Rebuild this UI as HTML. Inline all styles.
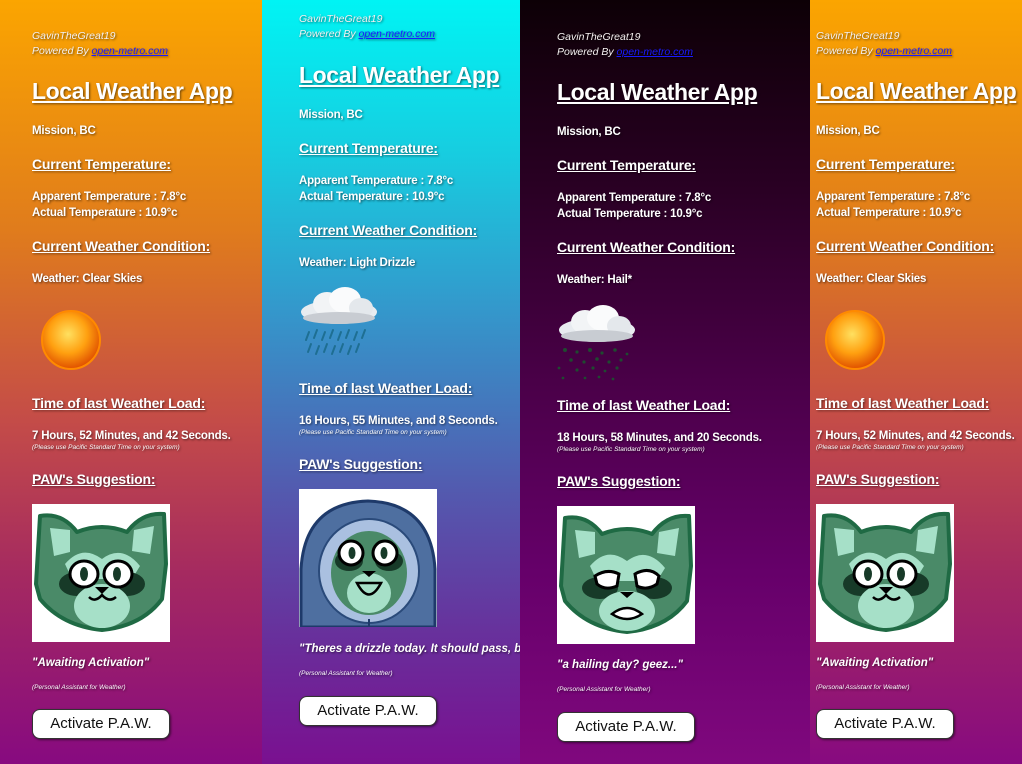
<!DOCTYPE html>
<html><head><meta charset="utf-8">
<style>
*{margin:0;padding:0;box-sizing:border-box}
body{width:1022px;height:764px;overflow:hidden;position:relative;font-family:"Liberation Sans",sans-serif;}
.p{position:absolute;top:0;height:764px;overflow:hidden}
.p1{left:0;width:262px;background:linear-gradient(#fba500 0%,#e07c1c 30%,#c44c48 55%,#a52a60 75%,#870a80 100%)}
.p4{left:810px;width:212px;background:linear-gradient(#fba500 0%,#e07c1c 30%,#c44c48 55%,#a52a60 75%,#870a80 100%)}
.p2{left:262px;width:258px;background:linear-gradient(#00f4f4 0%,#17cde0 20%,#3399cc 40%,#5458ae 65%,#6a2c9a 85%,#7a1090 100%)}
.p3{left:520px;width:290px;background:linear-gradient(#0d0006 0%,#2a0024 25%,#4a0048 50%,#66006a 75%,#80087e 100%)}
.t{position:absolute;white-space:nowrap;line-height:20px;color:#fff;text-shadow:1px 1px 2px rgba(0,0,0,.55)}
.g{font-size:10.5px;font-style:italic;color:#f4f0f0}
.g a{color:#1a1aff;text-decoration:underline}
.h1{font-size:23px;font-weight:bold;text-decoration:underline;letter-spacing:-0.4px}
.h2{font-size:14px;font-weight:bold;text-decoration:underline;letter-spacing:-0.2px}
.b{font-size:11.5px;font-weight:bold;letter-spacing:-0.2px}
.n{font-size:6.5px;font-style:italic}
.q{font-size:11.5px;font-weight:bold;font-style:italic}
.btn{position:absolute;width:138px;height:30px;background:#fff;border:1px solid #333;border-radius:8px;font-size:15px;color:#111;text-align:center;line-height:28px;box-shadow:1px 1px 2px rgba(0,0,0,.5)}
.img{position:absolute;width:138px;height:138px;background:#fff}
svg{display:block}
</style></head><body>

<svg width="0" height="0" style="position:absolute">
<defs>
<radialGradient id="sun" cx="45%" cy="40%" r="60%"><stop offset="0" stop-color="#ffe060"/><stop offset=".55" stop-color="#ffa010"/><stop offset="1" stop-color="#e05000"/></radialGradient>
<symbol id="rac" viewBox="0 0 138 138">
<path d="M8 12 Q30 8 45 28 Q70 18 95 28 Q110 8 132 10 L134 60 L130 95 Q110 122 70 126 Q30 122 8 95 L4 80 Z" fill="#4a8a68" stroke="#1f6a44" stroke-width="4" stroke-linejoin="round"/>
<path d="M18 24 L38 26 L38 48 L22 52 Z" fill="#a6e0c8"/>
<path d="M122 22 L102 26 L100 47 L118 50 Z" fill="#a6e0c8"/>
<path d="M33 60 Q50 40 70 55 Q90 40 108 62 L100 75 L40 75 Z" fill="#a6e0c8"/>
<ellipse cx="45" cy="80" rx="18" ry="12" fill="#173a28"/>
<ellipse cx="95" cy="80" rx="18" ry="12" fill="#173a28"/>
<ellipse cx="70" cy="102" rx="28" ry="22" fill="#a6e0c8"/>
<ellipse cx="52" cy="70" rx="14" ry="13" fill="#fff" stroke="#000" stroke-width="3"/>
<ellipse cx="86" cy="70" rx="14" ry="13" fill="#fff" stroke="#000" stroke-width="3"/>
<ellipse cx="52" cy="70" rx="4" ry="7" fill="#173a28"/>
<ellipse cx="85" cy="70" rx="4" ry="7" fill="#173a28"/>
<path d="M63 83 L77 83 L70 90 Z" fill="#000"/>
<path d="M57 93 Q63 99 70 91 Q77 99 84 93" fill="none" stroke="#000" stroke-width="2.5"/>
</symbol>
<symbol id="rac3" viewBox="0 0 138 138">
<path d="M8 12 Q30 8 45 28 Q70 18 95 28 Q110 8 132 10 L134 60 L130 95 Q110 122 70 126 Q30 122 8 95 L4 80 Z" fill="#4a8a68" stroke="#1f6a44" stroke-width="4" stroke-linejoin="round"/>
<path d="M18 24 L38 26 L38 48 L22 52 Z" fill="#a6e0c8"/>
<path d="M122 22 L102 26 L100 47 L118 50 Z" fill="#a6e0c8"/>
<path d="M33 60 Q50 40 70 55 Q90 40 108 62 L100 75 L40 75 Z" fill="#a6e0c8"/>
<ellipse cx="43" cy="82" rx="18" ry="11" fill="#173a28"/>
<ellipse cx="97" cy="82" rx="18" ry="11" fill="#173a28"/>
<ellipse cx="70" cy="105" rx="28" ry="20" fill="#a6e0c8"/>
<path d="M38 70 Q50 62 62 68 L60 80 Q48 85 40 78 Z" fill="#fff" stroke="#000" stroke-width="3"/>
<path d="M78 68 Q92 60 102 70 L100 78 Q90 85 80 80 Z" fill="#fff" stroke="#000" stroke-width="3"/>
<path d="M63 86 L77 86 L70 92 Z" fill="#000"/>
<path d="M55 108 Q70 96 85 108 Q70 118 55 108 Z" fill="#fff" stroke="#000" stroke-width="2.5"/>
</symbol>
<symbol id="rac2" viewBox="0 0 138 138">
<path d="M2 138 L2 80 Q6 14 69 12 Q132 14 136 80 L136 138 Z" fill="#4e6fa0" stroke="#1e3a6a" stroke-width="3"/>
<ellipse cx="70" cy="82" rx="50" ry="52" fill="#aac0e0" stroke="#2a4a7a" stroke-width="2"/>
<ellipse cx="70" cy="84" rx="38" ry="42" fill="#4a8a68"/>
<ellipse cx="50" cy="72" rx="14" ry="10" fill="#173a28"/>
<ellipse cx="90" cy="72" rx="14" ry="10" fill="#173a28"/>
<ellipse cx="70" cy="104" rx="22" ry="20" fill="#a6e0c8"/>
<ellipse cx="52" cy="64" rx="12" ry="12" fill="#fff" stroke="#000" stroke-width="3"/>
<ellipse cx="86" cy="64" rx="12" ry="12" fill="#fff" stroke="#000" stroke-width="3"/>
<ellipse cx="53" cy="64" rx="3.5" ry="6" fill="#173a28"/>
<ellipse cx="85" cy="64" rx="3.5" ry="6" fill="#173a28"/>
<path d="M63 82 L77 82 L70 88 Z" fill="#000"/>
<path d="M58 94 Q70 117 82 94 Z" fill="#a6e0c8" stroke="#000" stroke-width="2.5"/>
<line x1="70" y1="130" x2="70" y2="138" stroke="#1e3a6a" stroke-width="2"/>
</symbol>
<symbol id="cloud" viewBox="0 0 80 40">
<ellipse cx="40" cy="26" rx="38" ry="12" fill="#e8ecf0"/>
<ellipse cx="28" cy="18" rx="14" ry="12" fill="#f2f4f6"/>
<ellipse cx="46" cy="14" rx="16" ry="13" fill="#fafbfc"/>
<ellipse cx="62" cy="22" rx="12" ry="10" fill="#e4e8ec"/>
<ellipse cx="40" cy="32" rx="36" ry="6" fill="#c8ccd2"/>
</symbol>
</defs>
</svg>

<!-- Panel 1 -->
<div class="p p1">
<div class="t g" style="left:32px;top:26px">GavinTheGreat19</div>
<div class="t g" style="left:32px;top:41px">Powered By <a>open-metro.com</a></div>
<div class="t h1" style="left:32px;top:81px">Local Weather App</div>
<div class="t b" style="left:32px;top:121px">Mission, BC</div>
<div class="t h2" style="left:32px;top:154px">Current Temperature:</div>
<div class="t b" style="left:32px;top:187px">Apparent Temperature : 7.8°c</div>
<div class="t b" style="left:32px;top:203px">Actual Temperature : 10.9°c</div>
<div class="t h2" style="left:32px;top:236px">Current Weather Condition:</div>
<div class="t b" style="left:32px;top:269px">Weather: Clear Skies</div>
<svg style="position:absolute;left:40px;top:309px" width="62" height="62"><circle cx="31" cy="31" r="29" fill="url(#sun)" stroke="#ff8a00" stroke-width="2"/></svg>
<div class="t h2" style="left:32px;top:393px">Time of last Weather Load:</div>
<div class="t b" style="left:32px;top:426px">7 Hours, 52 Minutes, and 42 Seconds.</div>
<div class="t n" style="left:32px;top:438px">(Please use Pacific Standard Time on your system)</div>
<div class="t h2" style="left:32px;top:469px">PAW's Suggestion:</div>
<div class="img" style="left:32px;top:504px"><svg width="138" height="138"><use href="#rac"/></svg></div>
<div class="t q" style="left:32px;top:653px">"Awaiting Activation"</div>
<div class="t n" style="left:32px;top:678px">(Personal Assistant for Weather)</div>
<div class="btn" style="left:32px;top:709px">Activate P.A.W.</div>
</div>

<!-- Panel 2 -->
<div class="p p2">
<div class="t g" style="left:37px;top:9px">GavinTheGreat19</div>
<div class="t g" style="left:37px;top:24px">Powered By <a>open-metro.com</a></div>
<div class="t h1" style="left:37px;top:65px">Local Weather App</div>
<div class="t b" style="left:37px;top:105px">Mission, BC</div>
<div class="t h2" style="left:37px;top:138px">Current Temperature:</div>
<div class="t b" style="left:37px;top:171px">Apparent Temperature : 7.8°c</div>
<div class="t b" style="left:37px;top:187px">Actual Temperature : 10.9°c</div>
<div class="t h2" style="left:37px;top:220px">Current Weather Condition:</div>
<div class="t b" style="left:37px;top:253px">Weather: Light Drizzle</div>
<svg style="position:absolute;left:37px;top:286px" width="80" height="78">
<use href="#cloud" width="80" height="40"/>
<g stroke="#1a6a8a" stroke-width="2" stroke-linecap="round" opacity=".85">
<line x1="10" y1="46" x2="7" y2="54"/><line x1="18" y1="44" x2="15" y2="52"/><line x1="26" y1="46" x2="23" y2="54"/><line x1="34" y1="44" x2="31" y2="52"/><line x1="42" y1="46" x2="39" y2="54"/><line x1="50" y1="44" x2="47" y2="52"/><line x1="58" y1="46" x2="55" y2="54"/><line x1="66" y1="44" x2="63" y2="52"/>
<line x1="12" y1="58" x2="9" y2="66"/><line x1="20" y1="60" x2="17" y2="68"/><line x1="28" y1="58" x2="25" y2="66"/><line x1="36" y1="60" x2="33" y2="68"/><line x1="44" y1="58" x2="41" y2="66"/><line x1="52" y1="60" x2="49" y2="68"/><line x1="60" y1="58" x2="57" y2="66"/>
</g></svg>
<div class="t h2" style="left:37px;top:378px">Time of last Weather Load:</div>
<div class="t b" style="left:37px;top:411px">16 Hours, 55 Minutes, and 8 Seconds.</div>
<div class="t n" style="left:37px;top:423px">(Please use Pacific Standard Time on your system)</div>
<div class="t h2" style="left:37px;top:454px">PAW's Suggestion:</div>
<div class="img" style="left:37px;top:489px"><svg width="138" height="138"><use href="#rac2"/></svg></div>
<div class="t q" style="left:37px;top:639px">"Theres a drizzle today. It should pass, but stay dry!"</div>
<div class="t n" style="left:37px;top:664px">(Personal Assistant for Weather)</div>
<div class="btn" style="left:37px;top:696px">Activate P.A.W.</div>
</div>

<!-- Panel 3 -->
<div class="p p3">
<div class="t g" style="left:37px;top:27px">GavinTheGreat19</div>
<div class="t g" style="left:37px;top:42px">Powered By <a>open-metro.com</a></div>
<div class="t h1" style="left:37px;top:82px">Local Weather App</div>
<div class="t b" style="left:37px;top:122px">Mission, BC</div>
<div class="t h2" style="left:37px;top:155px">Current Temperature:</div>
<div class="t b" style="left:37px;top:188px">Apparent Temperature : 7.8°c</div>
<div class="t b" style="left:37px;top:204px">Actual Temperature : 10.9°c</div>
<div class="t h2" style="left:37px;top:237px">Current Weather Condition:</div>
<div class="t b" style="left:37px;top:270px">Weather: Hail*</div>
<svg style="position:absolute;left:37px;top:304px" width="80" height="78">
<use href="#cloud" width="80" height="40"/>
<g fill="#1f4a30">
<circle cx="8" cy="46" r="2"/><circle cx="20" cy="48" r="1.6"/><circle cx="33" cy="46" r="2"/><circle cx="45" cy="49" r="1.6"/><circle cx="58" cy="46" r="1.8"/><circle cx="70" cy="50" r="1.4"/>
<circle cx="14" cy="56" r="1.8"/><circle cx="27" cy="58" r="1.6"/><circle cx="40" cy="55" r="1.8"/><circle cx="52" cy="58" r="1.6"/><circle cx="64" cy="56" r="1.6"/>
<circle cx="2" cy="64" r="1.4"/><circle cx="20" cy="66" r="1.6"/><circle cx="36" cy="64" r="1.6"/><circle cx="48" cy="67" r="1.4"/><circle cx="60" cy="64" r="1.6"/>
<circle cx="6" cy="74" r="1.4"/><circle cx="28" cy="74" r="1.4"/><circle cx="42" cy="73" r="1.4"/><circle cx="56" cy="75" r="1.4"/>
</g></svg>
<div class="t h2" style="left:37px;top:395px">Time of last Weather Load:</div>
<div class="t b" style="left:37px;top:428px">18 Hours, 58 Minutes, and 20 Seconds.</div>
<div class="t n" style="left:37px;top:440px">(Please use Pacific Standard Time on your system)</div>
<div class="t h2" style="left:37px;top:471px">PAW's Suggestion:</div>
<div class="img" style="left:37px;top:506px"><svg width="138" height="138"><use href="#rac3"/></svg></div>
<div class="t q" style="left:37px;top:655px">"a hailing day? geez..."</div>
<div class="t n" style="left:37px;top:680px">(Personal Assistant for Weather)</div>
<div class="btn" style="left:37px;top:712px">Activate P.A.W.</div>
</div>

<!-- Panel 4 -->
<div class="p p4">
<div class="t g" style="left:6px;top:26px">GavinTheGreat19</div>
<div class="t g" style="left:6px;top:41px">Powered By <a>open-metro.com</a></div>
<div class="t h1" style="left:6px;top:81px">Local Weather App</div>
<div class="t b" style="left:6px;top:121px">Mission, BC</div>
<div class="t h2" style="left:6px;top:154px">Current Temperature:</div>
<div class="t b" style="left:6px;top:187px">Apparent Temperature : 7.8°c</div>
<div class="t b" style="left:6px;top:203px">Actual Temperature : 10.9°c</div>
<div class="t h2" style="left:6px;top:236px">Current Weather Condition:</div>
<div class="t b" style="left:6px;top:269px">Weather: Clear Skies</div>
<svg style="position:absolute;left:14px;top:309px" width="62" height="62"><circle cx="31" cy="31" r="29" fill="url(#sun)" stroke="#ff8a00" stroke-width="2"/></svg>
<div class="t h2" style="left:6px;top:393px">Time of last Weather Load:</div>
<div class="t b" style="left:6px;top:426px">7 Hours, 52 Minutes, and 42 Seconds.</div>
<div class="t n" style="left:6px;top:438px">(Please use Pacific Standard Time on your system)</div>
<div class="t h2" style="left:6px;top:469px">PAW's Suggestion:</div>
<div class="img" style="left:6px;top:504px"><svg width="138" height="138"><use href="#rac"/></svg></div>
<div class="t q" style="left:6px;top:653px">"Awaiting Activation"</div>
<div class="t n" style="left:6px;top:678px">(Personal Assistant for Weather)</div>
<div class="btn" style="left:6px;top:709px">Activate P.A.W.</div>
</div>

</body></html>
